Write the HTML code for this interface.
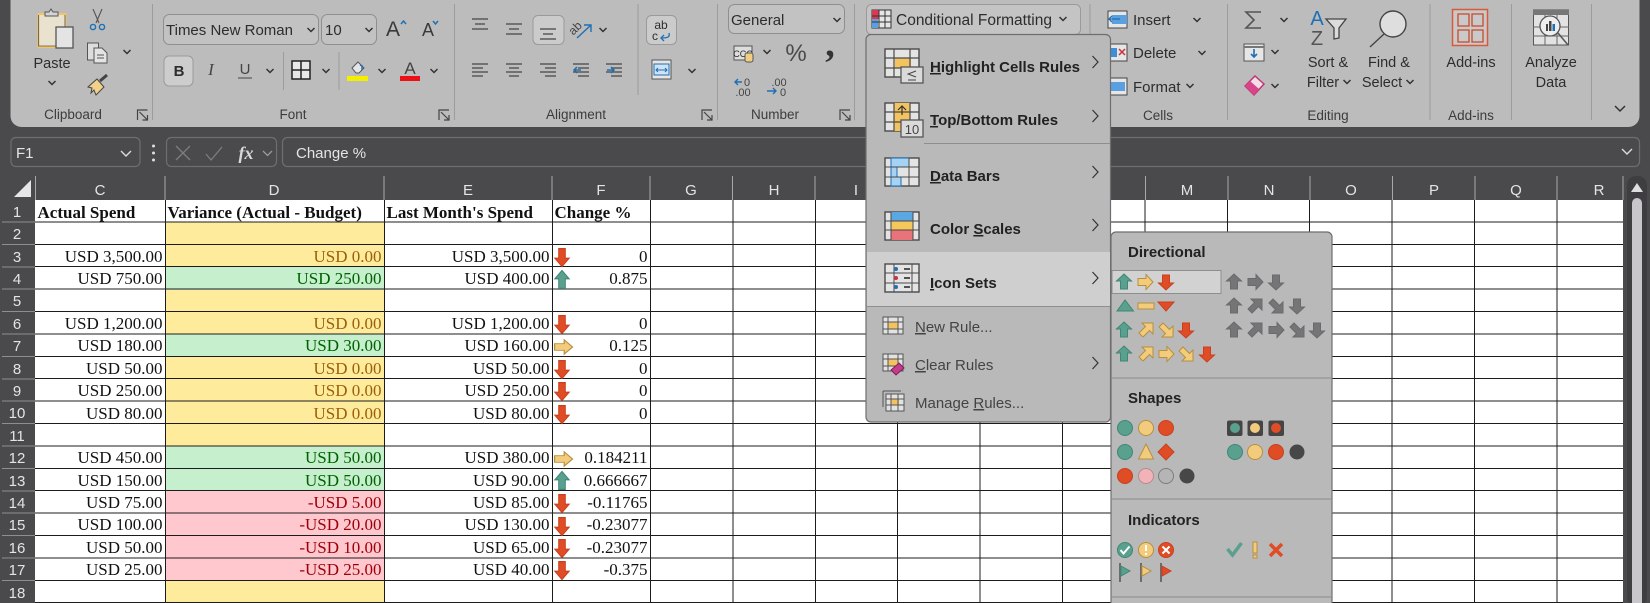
<!DOCTYPE html>
<html><head><meta charset="utf-8"><title>Excel Conditional Formatting</title>
<style>
html,body{margin:0;padding:0;background:#4a4a4c;width:1650px;height:603px;overflow:hidden}
#cells{position:absolute;left:35px;top:200px;display:grid;grid-template-columns:130px 219px 168px 98px;grid-auto-rows:22.4px;font:17px/24px "Liberation Serif",serif;color:#111;background:#fff;width:1588px;height:403px}
#cells div{text-align:right;padding:0 2.500px 0 0;white-space:nowrap}
#cells .b{font-weight:bold;text-align:left;padding:0 0 0 2.500px;line-height:26px}
#cells .y{background:#ffeb9c;color:#9c5f08}
#cells .g{background:#c6efce;color:#006100}
#cells .r{background:#ffc7ce;color:#9c0006}
#h{position:absolute;left:35px;top:200px;width:1588px;height:403px;background:repeating-linear-gradient(to bottom,transparent 0,transparent 21.4px,#1c1c1c 21.4px,#1c1c1c 22.4px)}
#v{position:absolute;left:650px;top:200px;width:973px;height:403px;background:repeating-linear-gradient(to right,#1c1c1c 0,#1c1c1c 1px,transparent 1px,transparent 82.4px)}
.l{position:absolute;top:200px;width:1px;height:403px;background:#1c1c1c}
svg{position:absolute;left:0;top:0}
text{font-family:"Liberation Sans",sans-serif;font-size:14.5px;fill:#2d2d2d}
.m{text-anchor:middle}
.w{fill:#e4e4e4;font-size:15px}
.k{font-weight:bold;font-size:15px;fill:#222}
.n{fill:#444;font-size:14.5px}
.lb{fill:#3c3c3c;font-size:13.5px;text-anchor:middle}
.u{text-decoration:underline}
.t{fill:#5aa08e;stroke:#3f8675}
.ye{fill:#f3cb7c;stroke:#b5903f}
.re{fill:#e04c25;stroke:#c8401f}
.gr{fill:#757577;stroke:#6a6a6c}
.bx{fill:#e6e6e6;stroke:#4a4a4a}
</style></head><body>
<div id="cells">
<div class="b">Actual Spend</div><div class="b">Variance (Actual - Budget)</div><div class="b">Last Month's Spend</div><div class="b">Change %</div>
<div></div><div class="y"></div><div></div><div></div>
<div>USD 3,500.00</div><div class="y">USD 0.00</div><div>USD 3,500.00</div><div>0</div>
<div>USD 750.00</div><div class="g">USD 250.00</div><div>USD 400.00</div><div>0.875</div>
<div></div><div class="y"></div><div></div><div></div>
<div>USD 1,200.00</div><div class="y">USD 0.00</div><div>USD 1,200.00</div><div>0</div>
<div>USD 180.00</div><div class="g">USD 30.00</div><div>USD 160.00</div><div>0.125</div>
<div>USD 50.00</div><div class="y">USD 0.00</div><div>USD 50.00</div><div>0</div>
<div>USD 250.00</div><div class="y">USD 0.00</div><div>USD 250.00</div><div>0</div>
<div>USD 80.00</div><div class="y">USD 0.00</div><div>USD 80.00</div><div>0</div>
<div></div><div class="y"></div><div></div><div></div>
<div>USD 450.00</div><div class="g">USD 50.00</div><div>USD 380.00</div><div>0.184211</div>
<div>USD 150.00</div><div class="g">USD 50.00</div><div>USD 90.00</div><div>0.666667</div>
<div>USD 75.00</div><div class="r">-USD 5.00</div><div>USD 85.00</div><div>-0.11765</div>
<div>USD 100.00</div><div class="r">-USD 20.00</div><div>USD 130.00</div><div>-0.23077</div>
<div>USD 50.00</div><div class="r">-USD 10.00</div><div>USD 65.00</div><div>-0.23077</div>
<div>USD 25.00</div><div class="r">-USD 25.00</div><div>USD 40.00</div><div>-0.375</div>
<div></div><div class="y"></div><div></div><div></div>
</div>
<div id="h"></div><div id="v"></div>
<div class="l" style="left:165px"></div><div class="l" style="left:384px"></div><div class="l" style="left:552px"></div>

<svg width="1650" height="603" viewBox="0 0 1650 603" xmlns="http://www.w3.org/2000/svg">
<defs>
<path id="c" d="M-3.5-2 0 1.5 3.5-2" fill="none" stroke="#333" stroke-width="1.5"/>
<path id="a" d="M0-8 7.500-1 3.500-1 3.500 7-3.500 7-3.500-1-7.500-1Z" stroke-width="1"/>
<path id="d" d="M-4-7H7V4L3.500 .5-3 7-7 3-.5-3.500Z" stroke-width="1"/>
<path id="cr" d="M-2.5-6 3 0-2.5 6" fill="none" stroke="#333" stroke-width="1.2"/>
<path id="la" d="M-5 5V-5H5M-3-3 5 5M5 0V5H0" fill="none" stroke="#444" stroke-width="1.2"/>
<g id="lnc" stroke="#5a5a5a" stroke-width="1.4"><path d="M-8-5H8M-5 0H5M-8 5H8"/></g>
<g id="lnl" stroke="#5a5a5a" stroke-width="1.4"><path d="M-8-6H8M-8-2H3M-8 2H8M-8 6H3"/></g>
<g id="lnm" stroke="#5a5a5a" stroke-width="1.4"><path d="M-8-6H8M-5-2H5M-8 2H8M-5 6H5"/></g>
<g id="lnr" stroke="#5a5a5a" stroke-width="1.4"><path d="M-8-6H8M-3-2H8M-8 2H8M-3 6H8"/></g>
<g id="gc"><rect x="0" y="0" width="34" height="28" fill="#e4e4e4" stroke="#4a4a4a" stroke-width="1.4"/></g>
<g id="g2"><path d="M9 0V28M25 0V28M0 9H34M0 19H34" stroke="#4a4a4a" stroke-width="1.2" fill="none"/></g>
<path id="fl" d="M-5-9V10" stroke="#6b6b6b" stroke-width="2"/>
</defs>

<!-- Ribbon -->
<rect x="10.5" y="-12" width="1629" height="139" rx="11" fill="#bcbcbc"/>
<g stroke="#9c9c9c" stroke-width="1">
<path d="M152.5 4V120M454.5 4V120M638 4V95M717.5 4V120M854.5 4V120M1090 4V120M1227.5 4V120M1430 4V120M1511.5 4V120M1591.5 4V120"/>
<path d="M283.5 52V90M339 52V90"/>
</g>
<!-- Clipboard -->
<rect x="38.500" y="14" width="27" height="33" fill="#e8e2cf" stroke="#f2c464" stroke-width="2"/>
<path d="M38.500 15V46H65V15" fill="none" stroke="#555" stroke-width=".8"/>
<path d="M45 16v-4h4l2-3 2 3h5v4z" fill="#d4d4d4" stroke="#555"/>
<rect x="56" y="27" width="17" height="21" fill="#e4e4e4" stroke="#555" stroke-width="1.3"/>
<text x="52" y="68" class="m">Paste</text>
<use href="#c" x="52" y="83"/>
<path d="M93 9 99 23M102 9 96 23" stroke="#555" stroke-width="1.1"/>
<circle cx="93" cy="27" r="2.600" fill="none" stroke="#1e6fb4" stroke-width="1.4"/><circle cx="102" cy="27" r="2.600" fill="none" stroke="#1e6fb4" stroke-width="1.4"/>
<rect x="87.500" y="43" width="11" height="17" fill="#ddd" stroke="#555"/><path d="M94 48h8l5 5v10H94z" fill="#e4e4e4" stroke="#555"/><path d="M97 55h7M97 58h7" stroke="#555"/>
<use href="#c" x="127" y="52"/>
<path d="M88 87 97 79 104 87 96 95 94 90 91 93 92 88z" fill="#f2d28a" stroke="#444"/><path d="M100 81 107 75" stroke="#444" stroke-width="3"/>
<text x="73" y="119" class="lb">Clipboard</text>
<use href="#la" x="142.500" y="115"/>
<!-- Font -->
<rect x="163.500" y="14.500" width="155" height="30" rx="6" fill="#c2c2c2" stroke="#8f8f8f"/>
<rect x="321.500" y="14.500" width="55" height="30" rx="6" fill="#c2c2c2" stroke="#8f8f8f"/>
<text x="166" y="35" style="font-size:15px">Times New Roman</text>
<text x="325" y="35" style="font-size:15px">10</text>
<use href="#c" x="311" y="30"/><use href="#c" x="369" y="30"/>
<text x="393" y="36" class="m" style="font-size:21px;fill:#3a3a3a">A</text><path d="M401 24l2.500-3 2.500 3" fill="none" stroke="#1e6fb4" stroke-width="1.500"/>
<text x="428" y="36" class="m" style="font-size:18px;fill:#3a3a3a">A</text><path d="M433 21l2.500 3 2.500-3" fill="none" stroke="#1e6fb4" stroke-width="1.500"/>
<rect x="164" y="56" width="29" height="30" rx="5" fill="#cdcdcd" stroke="#9a9a9a"/>
<text x="179" y="76" class="m" style="font-weight:bold;font-size:15px">B</text>
<text x="211" y="75" class="m" style="font-family:'Liberation Serif',serif;font-style:italic;font-size:17px;fill:#444">I</text>
<text x="245" y="74" class="m" style="font-size:15px;fill:#444">U</text><path d="M238 78h14" stroke="#444"/>
<use href="#c" x="270" y="71"/>
<rect x="292" y="61" width="18" height="18" fill="#e8e8e8" stroke="#222" stroke-width="1.500"/><path d="M301 61V79M292 70H310" stroke="#222" stroke-width="1.500"/>
<use href="#c" x="326" y="71"/>
<path d="M352 68l6-6 6 6-5 5h-3z" fill="#e6e6e6" stroke="#555"/><path d="M362 70v-4l-2-1" fill="none" stroke="#1e6fb4" stroke-width="1.500"/>
<rect x="347" y="76" width="21" height="5" fill="#f4ee00"/>
<use href="#c" x="382" y="71"/>
<text x="410" y="74" class="m" style="font-size:17px;fill:#444">A</text><rect x="400" y="76" width="20" height="5" fill="#ec0f16"/>
<use href="#c" x="434" y="71"/>
<text x="293" y="119" class="lb">Font</text>
<use href="#la" x="444" y="115"/>
<!-- Alignment -->
<rect x="533" y="15.500" width="31" height="29" rx="5" fill="#cbcbcb" stroke="#9a9a9a"/>
<use href="#lnc" x="480" y="24"/><use href="#lnc" x="514" y="29"/><use href="#lnc" x="548" y="34"/>
<use href="#lnl" x="480" y="70"/><use href="#lnm" x="514" y="70"/><use href="#lnr" x="548" y="70"/>
<use href="#lnr" x="614" y="70"/><path d="M574 70h7M577 67l-3 3 3 3" fill="none" stroke="#1e6fb4" stroke-width="1.500"/>
<use href="#lnr" x="581" y="70"/><path d="M607 70h7M611 67l3 3-3 3" fill="none" stroke="#1e6fb4" stroke-width="1.500"/>
<text x="578" y="31" style="font-size:12px;fill:#444" transform="rotate(-45 578 31)" class="m">ab</text>
<path d="M577 38 591 25M584 25h7v7" fill="none" stroke="#1e6fb4" stroke-width="1.400"/>
<use href="#c" x="603" y="30"/>
<rect x="646.500" y="15.500" width="30" height="29" rx="5" fill="#cbcbcb" stroke="#9a9a9a"/>
<text x="661" y="29" class="m" style="font-size:12px">ab</text><text x="655" y="40" class="m" style="font-size:12px">c</text>
<path d="M669 33c1 4-1 5-8 5M664 35l-3 3 3 3" fill="none" stroke="#1e6fb4" stroke-width="1.300"/>
<rect x="652" y="60" width="19" height="19" fill="#e6e6e6" stroke="#555"/><rect x="654" y="64" width="15" height="11" fill="#cfe3f5" stroke="#1e6fb4"/><path d="M656 70h11M658 68l-2 2 2 2M665 68l2 2-2 2" fill="none" stroke="#1e6fb4"/>
<use href="#c" x="692" y="71"/>
<text x="576" y="119" class="lb">Alignment</text>
<use href="#la" x="707" y="115"/>
<!-- Number -->
<rect x="728.500" y="4.500" width="116" height="29" rx="6" fill="#c2c2c2" stroke="#8f8f8f"/>
<text x="731" y="25" style="font-size:15px">General</text>
<use href="#c" x="837" y="20"/>
<rect x="734" y="46" width="18" height="14" fill="#ddd" stroke="#555"/><text x="743" y="57" class="m" style="font-size:9px">CCC</text><rect x="745" y="53" width="8" height="9" rx="2" fill="#f2ce83" stroke="#555"/>
<use href="#c" x="767" y="52"/>
<text x="796" y="61" class="m" style="font-size:24px;fill:#4a4a4a">%</text>
<text x="830" y="56" class="m" style="font-family:'Liberation Serif',serif;font-size:38px;font-weight:bold;fill:#333">,</text>
<text x="747" y="86" class="m" style="font-size:11px;fill:#444">0</text><text x="743" y="96" class="m" style="font-size:11px;fill:#444">.00</text>
<path d="M742 82h-7M738 79l-3 3 3 3" fill="none" stroke="#1e6fb4" stroke-width="1.400"/>
<text x="779" y="86" class="m" style="font-size:11px;fill:#444">.00</text><text x="783" y="96" class="m" style="font-size:11px;fill:#444">0</text>
<path d="M767 91h9M773 88l3 3-3 3" fill="none" stroke="#1e6fb4" stroke-width="1.400"/>
<text x="775" y="119" class="lb">Number</text>
<use href="#la" x="845" y="115"/>
<!-- CF button -->
<rect x="866.500" y="4.500" width="214" height="30" rx="5" fill="#c4c4c4" stroke="#9a9a9a"/>
<rect x="872" y="10" width="19" height="18" fill="#e6e6e6" stroke="#333"/><rect x="872" y="10" width="7" height="9" fill="#d83a54"/><rect x="872" y="19" width="6" height="9" fill="#5aa0e0"/><path d="M879 10V28M885 10V28M872 16H891M872 22H891" stroke="#333"/>
<text x="896" y="25" style="font-size:15.500px">Conditional Formatting</text>
<use href="#c" x="1063" y="19"/>
<!-- Cells -->
<text x="1133" y="25" style="font-size:15px">Insert</text><use href="#c" x="1197" y="20"/>
<text x="1133" y="58" style="font-size:15px">Delete</text><use href="#c" x="1202" y="53"/>
<text x="1133" y="92" style="font-size:15px">Format</text><use href="#c" x="1190" y="86"/>
<rect x="1108" y="11" width="19" height="17" fill="#e6e6e6" stroke="#444"/><rect x="1112" y="15" width="15" height="9" fill="#5aa0e0"/><path d="M1120 19h-11M1112 16l-3 3 3 3" stroke="#1e6fb4" fill="none" stroke-width="1.300"/>
<rect x="1108" y="44" width="19" height="17" fill="#e6e6e6" stroke="#444"/><rect x="1110" y="48" width="7" height="9" fill="#3f8fd8"/><path d="M1119 49l6 6M1125 49l-6 6" stroke="#c8323c" stroke-width="1.500"/>
<rect x="1108" y="78" width="19" height="17" fill="#e6e6e6" stroke="#444"/><rect x="1111" y="82" width="14" height="9" fill="#5aa0e0"/>
<text x="1158" y="120" class="lb">Cells</text>
<!-- Editing -->
<path d="M1261 12H1246L1254 20 1246 28H1261" fill="none" stroke="#555" stroke-width="1.600"/>
<use href="#c" x="1284" y="20"/>
<rect x="1244" y="44" width="20" height="17" fill="#e6e6e6" stroke="#555"/><path d="M1244 47h20" stroke="#777" stroke-width="2"/><path d="M1254 49v8M1251 54l3 3 3-3" fill="none" stroke="#1e6fb4" stroke-width="1.600"/>
<use href="#c" x="1275" y="52"/>
<path d="M1245 86 1255 76 1264 84 1254 95z" fill="#f0dde6" stroke="#c2326f" stroke-width="1.400"/><path d="M1245 86 1250 81 1259 89 1254 95z" fill="#d8458a"/>
<use href="#c" x="1275" y="86"/>
<text x="1317" y="25" class="m" style="font-size:20px;fill:#1e6fb4">A</text>
<text x="1317" y="45" class="m" style="font-size:20px;fill:#555">Z</text>
<path d="M1326 19h20l-7 9v10l-5 1V28z" fill="#dcdcdc" stroke="#444" stroke-width="1.300"/>
<circle cx="1393" cy="24" r="13" fill="#dedede" stroke="#444" stroke-width="1.400"/><path d="M1384 34 1370 47" stroke="#444" stroke-width="1.400"/>
<text x="1328" y="67" class="m">Sort &amp;</text><text x="1323" y="87" class="m">Filter</text><use href="#c" x="1347" y="82"/>
<text x="1389" y="67" class="m">Find &amp;</text><text x="1382" y="87" class="m">Select</text><use href="#c" x="1410" y="82"/>
<text x="1328" y="120" class="lb">Editing</text>
<!-- Add-ins -->
<rect x="1452.500" y="9.500" width="35" height="36" fill="#c9c9c9" stroke="#d85a3c" stroke-width="1.500"/>
<path d="M1458 14h11v12h-11zM1472 14h11v12h-11zM1458 30h11v12h-11zM1472 30h11v12h-11z" fill="none" stroke="#c8492c" stroke-width="1.300"/>
<text x="1471" y="67" class="m">Add-ins</text>
<text x="1471" y="120" class="lb">Add-ins</text>
<!-- Analyze -->
<rect x="1533.500" y="10" width="35" height="35" fill="#e2e2e2" stroke="#555"/><rect x="1533" y="10" width="36" height="5" fill="#777"/>
<path d="M1533 27h36M1533 36h36M1545 15v30M1557 15v30" stroke="#666"/>
<circle cx="1550" cy="26" r="10" fill="#eee" stroke="#555" stroke-width="1.300"/>
<path d="M1546 24h2v7h-2zM1549 21h2.500v10h-2.500z" fill="#444"/><path d="M1552.500 24h2.500v7h-2.500z" fill="#1e6fb4"/>
<path d="M1558 33 1568 45" stroke="#555" stroke-width="1.500"/>
<text x="1551" y="67" class="m">Analyze</text><text x="1551" y="87" class="m">Data</text>
<path d="M1615 106l5 5 5-5" fill="none" stroke="#333" stroke-width="1.500"/>

<!-- Formula bar -->
<g fill="none" stroke="#6e6e6e" stroke-width="1.200">
<rect x="11" y="137.500" width="129" height="29" rx="5"/>
<rect x="166.500" y="137.500" width="110" height="29" rx="5"/>
<rect x="282.500" y="137.500" width="1357" height="29" rx="5"/>
</g>
<text x="16" y="158" class="w" style="font-size:15px">F1</text>
<path d="M121 151l5 5 5-5M1622 149l5 5 5-5" fill="none" stroke="#dcdcdc" stroke-width="1.400"/>
<circle cx="153.500" cy="146" r="1.500" fill="#ddd"/><circle cx="153.500" cy="153" r="1.500" fill="#ddd"/><circle cx="153.500" cy="160" r="1.500" fill="#ddd"/>
<path d="M176 146l14 14M190 146l-14 14M206 154l5 6 11-13" fill="none" stroke="#7d7d7d" stroke-width="1.300"/>
<text x="246" y="159" class="m" style="font-family:'Liberation Serif',serif;font-style:italic;font-weight:bold;font-size:18px;fill:#d8d8d8">fx</text>
<path d="M263 151l4.500 4.500 4.500-4.500" fill="none" stroke="#9a9a9a" stroke-width="1.300"/>
<text x="296" y="158" class="w">Change %</text>

<!-- Column headers -->
<path d="M31 180V197H14Z" fill="#e6e6e6"/>
<g stroke="#a8a8a8" stroke-width="1"><path d="M35.500 176V200M165 176V200M384 176V200M552 176V200M650 176V200M732.500 176V200M815 176V200M1145.500 176V200M1228 176V200M1310 176V200M1392.500 176V200M1475 176V200M1557 176V200M1623 176V200"/></g>
<g class="hd">
<text x="100" y="195" class="w m">C</text><text x="274" y="195" class="w m">D</text><text x="468" y="195" class="w m">E</text><text x="601" y="195" class="w m">F</text><text x="691" y="195" class="w m">G</text><text x="774" y="195" class="w m">H</text><text x="856" y="195" class="w m">I</text><text x="1187" y="195" class="w m">M</text><text x="1269" y="195" class="w m">N</text><text x="1351" y="195" class="w m">O</text><text x="1434" y="195" class="w m">P</text><text x="1516" y="195" class="w m">Q</text><text x="1599" y="195" class="w m">R</text>
</g>
<!-- Row headers -->
<g stroke="#8e8e8e" stroke-width="1"><path d="M2 222H35M2 244.500H35M2 267H35M2 289H35M2 311.500H35M2 334H35M2 356.500H35M2 379H35M2 401H35M2 423.500H35M2 446H35M2 468.500H35M2 491H35M2 513H35M2 535.500H35M2 558H35M2 580.500H35"/></g>
<g style="text-anchor:middle">
<text x="17" y="217" class="w m">1</text><text x="17" y="239" class="w m">2</text><text x="17" y="262" class="w m">3</text><text x="17" y="284" class="w m">4</text><text x="17" y="306" class="w m">5</text><text x="17" y="329" class="w m">6</text><text x="17" y="351" class="w m">7</text><text x="17" y="374" class="w m">8</text><text x="17" y="396" class="w m">9</text><text x="17" y="418" class="w m">10</text><text x="17" y="441" class="w m">11</text><text x="17" y="463" class="w m">12</text><text x="17" y="486" class="w m">13</text><text x="17" y="508" class="w m">14</text><text x="17" y="530" class="w m">15</text><text x="17" y="553" class="w m">16</text><text x="17" y="575" class="w m">17</text><text x="17" y="598" class="w m">18</text>
</g>
<!-- Scrollbar -->
<rect x="1627" y="176" width="20" height="430" rx="9" fill="#3e3e40"/>
<path d="M1637 183l6 9h-12z" fill="#dedede"/>
<rect x="1632" y="198" width="10" height="420" rx="5" fill="#c8c6ca"/>

<!-- F column arrows -->
<g class="re"><use href="#a" transform="translate(562,257) rotate(180) scale(.95,1.2)"/><use href="#a" transform="translate(562,324) rotate(180) scale(.95,1.2)"/><use href="#a" transform="translate(562,369) rotate(180) scale(.95,1.2)"/><use href="#a" transform="translate(562,391) rotate(180) scale(.95,1.2)"/><use href="#a" transform="translate(562,414) rotate(180) scale(.95,1.2)"/><use href="#a" transform="translate(562,503) rotate(180) scale(.95,1.2)"/><use href="#a" transform="translate(562,526) rotate(180) scale(.95,1.2)"/><use href="#a" transform="translate(562,548) rotate(180) scale(.95,1.2)"/><use href="#a" transform="translate(562,570) rotate(180) scale(.95,1.2)"/></g>
<g class="t"><use href="#a" transform="translate(562,280) scale(.95,1.2)"/><use href="#a" transform="translate(562,481) scale(.95,1.2)"/></g>
<g class="ye"><use href="#a" transform="translate(563,347) rotate(90) scale(.95,1.2)"/><use href="#a" transform="translate(563,459) rotate(90) scale(.95,1.2)"/></g>

<!-- Conditional formatting menu -->
<rect x="866" y="34.500" width="244.500" height="387.500" rx="5" fill="#b9b9b9" stroke="#6e6e6e" stroke-width="1.200"/>
<rect x="867" y="252" width="243" height="54" fill="#cfcfcf"/>
<path d="M924 143.500H1110M867 306.500H1110" stroke="#8e8e8e"/>

<g transform="translate(885,49)"><use href="#gc"/><rect x="10" y="9" width="16" height="10" fill="#f3c35f"/><use href="#g2"/><rect x="16" y="18" width="22" height="16" fill="#dadada" stroke="#555" stroke-width="1.300"/><path d="M31 22l-8 3 8 3M23 31h8" fill="none" stroke="#444"/></g>
<g transform="translate(885,103)"><use href="#gc"/><rect x="9" y="0" width="16" height="28" fill="#f3c35f"/><use href="#g2"/><path d="M17 12V3M13 7l4-4 4 4" fill="none" stroke="#333" stroke-width="1.200"/><rect x="16" y="17" width="22" height="17" fill="#dadada" stroke="#555" stroke-width="1.300"/><text x="27" y="31" class="m" style="font-size:13px;fill:#444">10</text></g>
<g transform="translate(885,158)"><use href="#gc"/><rect x="6" y="0" width="18" height="9" fill="#a6d2f4" stroke="#1e6fb4"/><rect x="6" y="9" width="6" height="10" fill="#a6d2f4" stroke="#1e6fb4"/><rect x="6" y="19" width="10" height="9" fill="#a6d2f4" stroke="#1e6fb4"/><path d="M24 0V28M0 9H34M0 19H34" stroke="#4a4a4a" fill="none"/></g>
<g transform="translate(885,212)"><use href="#gc"/><rect x="6" y="0" width="22" height="9" fill="#5aa7e4"/><rect x="6" y="9" width="22" height="9" fill="#f6c75a"/><rect x="6" y="18" width="22" height="10" fill="#e8737b"/><path d="M6 0V28M28 0V28M0 9H34M0 18H34" stroke="#4a4a4a" fill="none"/></g>
<g transform="translate(885,264)"><use href="#gc"/><path d="M0 9H34M0 19H34M9 0V28M27 0V28" stroke="#4a4a4a" fill="none"/><circle cx="11" cy="5" r="2" fill="#1e6fb4"/><circle cx="11" cy="14" r="2" fill="#c8324a"/><circle cx="11" cy="23" r="2" fill="#1e6fb4"/><path d="M19 5h6M19 14h6M19 23h6" stroke="#222" stroke-width="1.500"/></g>

<text x="930" y="72" class="k"><tspan class="u">H</tspan>ighlight Cells Rules</text>
<text x="930" y="125" class="k"><tspan class="u">T</tspan>op/Bottom Rules</text>
<text x="930" y="181" class="k"><tspan class="u">D</tspan>ata Bars</text>
<text x="930" y="234" class="k">Color <tspan class="u">S</tspan>cales</text>
<text x="930" y="288" class="k"><tspan class="u">I</tspan>con Sets</text>
<use href="#cr" x="1095" y="62"/><use href="#cr" x="1095" y="116"/><use href="#cr" x="1095" y="172"/><use href="#cr" x="1095" y="225"/><use href="#cr" x="1095" y="278"/><use href="#cr" x="1095" y="363"/>

<g transform="translate(883,317)"><rect width="20" height="17" fill="#e2e2e2" stroke="#555"/><rect x="5" y="5" width="10" height="7" fill="#f3c35f"/><path d="M5 0V17M15 0V17M0 5H20M0 12H20" stroke="#555"/></g>
<g transform="translate(883,354)"><rect width="20" height="17" fill="#e2e2e2" stroke="#555"/><rect x="5" y="5" width="10" height="7" fill="#f3c35f"/><path d="M5 0V17M15 0V17M0 5H20M0 12H20" stroke="#555"/><path d="M8 16 16 9 21 14 13 21z" fill="#c43d8a" stroke="#7a1f56"/></g>
<g transform="translate(883,391)"><path d="M0 0H18M0 0V16" stroke="#555"/><rect x="3" y="3" width="18" height="17" fill="#e2e2e2" stroke="#555"/><rect x="8" y="8" width="8" height="6" fill="#f3c35f"/><path d="M8 3V20M15 3V20M3 8H21M3 14H21" stroke="#555"/></g>
<text x="915" y="332" class="n" style="font-size:15px"><tspan class="u">N</tspan>ew Rule...</text>
<text x="915" y="370" class="n" style="font-size:15px"><tspan class="u">C</tspan>lear Rules</text>
<text x="915" y="408" class="n" style="font-size:15px">Manage <tspan class="u">R</tspan>ules...</text>

<!-- Icon sets submenu -->
<rect x="1111" y="232" width="221" height="380" rx="5" fill="#b9b9b9" stroke="#6e6e6e" stroke-width="1.200"/>
<rect x="1112" y="270.500" width="109" height="23" fill="#d2d2d2" stroke="#8e8e8e"/>
<text x="1128" y="257" class="k">Directional</text>
<path d="M1112 378H1332M1112 499H1332M1112 597H1332" stroke="#8a8a8a"/>
<text x="1128" y="403" class="k">Shapes</text>
<text x="1128" y="525" class="k">Indicators</text>

<g class="t"><use href="#a" x="1124" y="282"/><use href="#a" x="1124" y="330"/><use href="#a" x="1124" y="354"/><path d="M1117 311 1125 300 1133.500 311Z"/></g>
<g class="ye">
<use href="#a" transform="translate(1145,282) rotate(90)"/>
<rect x="1138" y="303" width="16" height="6"/>
<use href="#d" x="1146" y="330"/><use href="#d" transform="translate(1166,330) rotate(90)"/>
<use href="#d" x="1146" y="354"/><use href="#a" transform="translate(1166,354) rotate(90)"/><use href="#d" transform="translate(1186,354) rotate(90)"/>
</g>
<g class="re">
<use href="#a" transform="translate(1166,282) rotate(180)"/>
<path d="M1158 302H1174L1166 311Z"/>
<use href="#a" transform="translate(1186,330) rotate(180)"/>
<use href="#a" transform="translate(1207,354) rotate(180)"/>
</g>
<g class="gr">
<use href="#a" x="1234" y="282"/><use href="#a" transform="translate(1255,282) rotate(90)"/><use href="#a" transform="translate(1276,282) rotate(180)"/>
<use href="#a" x="1234" y="306"/><use href="#d" x="1255" y="306"/><use href="#d" transform="translate(1276,306) rotate(90)"/><use href="#a" transform="translate(1297,306) rotate(180)"/>
<use href="#a" x="1234" y="330"/><use href="#d" x="1255" y="330"/><use href="#a" transform="translate(1276,330) rotate(90)"/><use href="#d" transform="translate(1297,330) rotate(90)"/><use href="#a" transform="translate(1317,330) rotate(180)"/>
</g>

<!-- Shapes -->
<circle cx="1125" cy="428" r="7.500" class="t"/><circle cx="1146" cy="428" r="7.500" class="ye"/><circle cx="1166" cy="428" r="7.500" class="re"/>
<rect x="1227" y="420.500" width="15.500" height="15.500" rx="2" fill="#454545"/><circle cx="1235" cy="428" r="5" fill="#5aa08e"/>
<rect x="1247.500" y="420.500" width="15.500" height="15.500" rx="2" fill="#454545"/><circle cx="1255" cy="428" r="5" fill="#f3cb7c"/>
<rect x="1268.500" y="420.500" width="15.500" height="15.500" rx="2" fill="#454545"/><circle cx="1276" cy="428" r="5" fill="#e04c25"/>
<circle cx="1125" cy="452" r="7.500" class="t"/><path d="M1146 444 1153.500 459H1138.500Z" class="ye"/><path d="M1166 444 1174 452 1166 460 1158 452Z" class="re"/>
<circle cx="1235" cy="452" r="7.500" class="t"/><circle cx="1255" cy="452" r="7.500" class="ye"/><circle cx="1276" cy="452" r="7.500" class="re"/><circle cx="1297" cy="452" r="7.500" fill="#474747"/>
<circle cx="1125" cy="476" r="7.500" class="re"/><circle cx="1146" cy="476" r="7.500" fill="#f1b3b8" stroke="#b88a8e"/><circle cx="1166" cy="476" r="7.500" fill="#b5b5b5" stroke="#7c7c7c"/><circle cx="1187" cy="476" r="7.500" fill="#474747"/>
<!-- Indicators -->
<circle cx="1125" cy="550" r="7.500" class="t"/><path d="M1120.500 550l3 3.500 6-7" fill="none" stroke="#fff" stroke-width="2"/>
<circle cx="1146" cy="550" r="7.500" class="ye"/><path d="M1146 545v6M1146 553v2" stroke="#fff" stroke-width="2"/>
<circle cx="1166" cy="550" r="7.500" class="re"/><path d="M1162.500 546.500l7 7M1169.500 546.500l-7 7" stroke="#fff" stroke-width="2"/>
<path d="M1227.500 549l5 6 9-12" fill="none" stroke="#5aa08e" stroke-width="3.500"/>
<rect x="1253" y="542" width="4" height="11" fill="#f3cb7c" stroke="#b5903f"/><rect x="1253" y="555" width="4" height="3" fill="#f3cb7c" stroke="#b5903f"/>
<path d="M1270 544l12 12M1282 544l-12 12" stroke="#e04c25" stroke-width="3.500"/>
<use href="#fl" x="1125" y="572"/><path d="M1121 566 1130 571 1121 576Z" class="t"/>
<use href="#fl" x="1146" y="572"/><path d="M1142 566 1151 571 1142 576Z" class="ye"/>
<use href="#fl" x="1166" y="572"/><path d="M1162 566 1171 571 1162 576Z" class="re"/>
</svg>
</body></html>
